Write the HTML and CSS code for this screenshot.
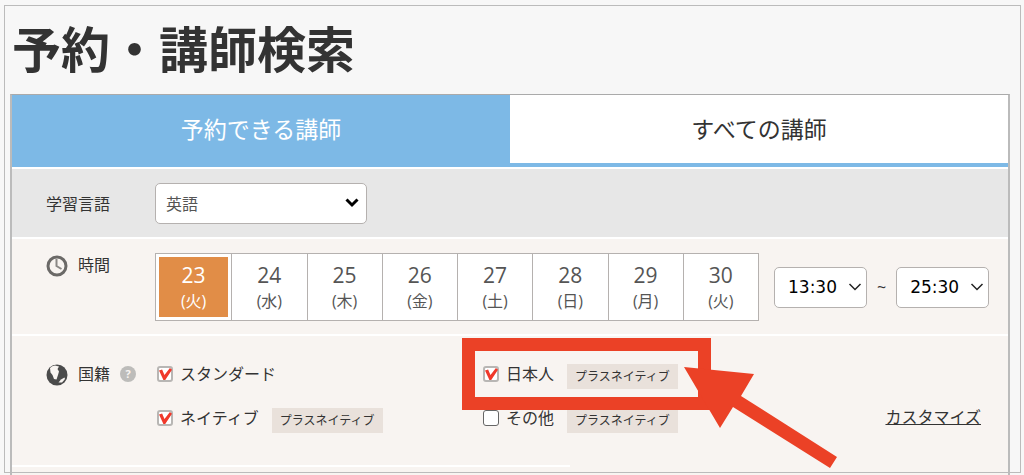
FILE: index.html
```html
<!DOCTYPE html>
<html lang="ja">
<head>
<meta charset="utf-8">
<meta name="viewport" content="width=device-width,initial-scale=1.0">
<title>予約・講師検索</title>
<link rel="stylesheet" href="styles.css">
</head>
<body>
<h1>予約・講師検索</h1>
<form class="search">
<nav class="tabs">
<a class="tab on" href="#reserve">予約できる講師</a>
<a class="tab" href="#all">すべての講師</a>
</nav>
<div class="row language">
<label class="name" for="language">学習言語</label>
<div class="selectbox wide">
<select id="language"><option>英語</option></select>
<svg class="arrow" width="14" height="10" viewBox="0 0 14 10"><path d="M1.5 1.5L7 7L12.5 1.5" fill="none" stroke="#000" stroke-width="3"/></svg>
</div>
</div>
<div class="row time">
<div class="name">
<svg width="22" height="24" viewBox="0 0 22 24"><circle cx="11" cy="13" r="9" fill="none" stroke="#6b6967" stroke-width="3"/><path d="M10.5 6V13L15.5 16" fill="none" stroke="#8a8886" stroke-width="2"/></svg>
<span>時間</span>
</div>
<div class="days">
<button type="button" class="on">23<small>(火)</small></button>
<button type="button">24<small>(水)</small></button>
<button type="button">25<small>(木)</small></button>
<button type="button">26<small>(金)</small></button>
<button type="button">27<small>(土)</small></button>
<button type="button">28<small>(日)</small></button>
<button type="button">29<small>(月)</small></button>
<button type="button">30<small>(火)</small></button>
</div>
<div class="range">
<div class="selectbox">
<select aria-label="開始時間"><option>13:30</option></select>
<svg class="arrow" width="14" height="10" viewBox="0 0 14 10"><path d="M1.5 2L7 7.5L12.5 2" fill="none" stroke="#222" stroke-width="1.5"/></svg>
</div>
<span>~</span>
<div class="selectbox">
<select aria-label="終了時間"><option>25:30</option></select>
<svg class="arrow" width="14" height="10" viewBox="0 0 14 10"><path d="M1.5 2L7 7.5L12.5 2" fill="none" stroke="#222" stroke-width="1.5"/></svg>
</div>
</div>
</div>
<div class="row country">
<div class="name">
<svg width="22" height="24" viewBox="0 -2 22 24"><circle cx="11" cy="11" r="10.5" fill="#4b4b4b"/><path d="M4 4Q6 1.5 9 1.5L13 2.5L11.5 5L13 7.5L12 11L10.5 15.5L8 15L6.5 11L4.5 8.5Z" fill="#f8f4f1"/><path d="M12.5 18.5L15 15.5L18.5 13.5L19 15L16 18.5Z" fill="#f8f4f1"/></svg>
<span>国籍</span>
<button type="button" class="help">?</button>
</div>
<div class="checks">
<div class="check"><label><input type="checkbox" checked>スタンダード</label></div>
<div class="check"><label><input type="checkbox" checked>日本人</label><span class="tag">プラスネイティブ</span>
<svg class="pointer" width="376" height="134" viewBox="0 0 376 134"><rect x="6.5" y="6.5" width="236" height="59" fill="none" stroke="#eb4126" stroke-width="13"/><path d="M222 29L292 36L279 58L375 119L368 130L271 69L258 90Z" fill="#eb4126"/></svg>
</div>
<div class="check"><label><input type="checkbox" checked>ネイティブ</label><span class="tag">プラスネイティブ</span></div>
<div class="check"><label><input type="checkbox">その他</label><span class="tag">プラスネイティブ</span></div>
</div>
<a class="customize" href="#customize">カスタマイズ</a>
</div>
<div class="next"></div>
</form>
<div class="frame"></div>
</body>
</html>
```

FILE: styles.css
```css
* {
 box-sizing: border-box;
}
body {
 background-color: #F7F7F7;
 color: #333;
 font-family: 'Open Sans','Noto Sans CJK JP',sans-serif;
 font-size: 16px;
 line-height: 24px;
 margin: 0;
 min-height: 100vh;
 padding: 12px 14px 0 10px;
 position: relative;
}
h1 {
 font-family: 'Noto Sans CJK JP',sans-serif;
 font-size: 49px;
 line-height: 70px;
 margin: 0 0 12px 2px;
}
.search {
 background-color: #F8F4F1;
 border: 2px solid #BBB;
 border-top: 1px solid #AAA;
 border-bottom: 0;
}
.tabs {
 background-color: #FFF;
 display: flex;
}
.tab {
 border-bottom: 4px solid #7DB9E6;
 color: #333;
 flex: 1;
 font-size: 23px;
 line-height: 68px;
 text-align: center;
 text-decoration: none;
}
.tab.on {
 background-color: #7DB9E6;
 color: #FFF;
}
.row {
 border-top: 2px solid #FFF;
 display: flex;
 padding: 14px 18px 13px 34px;
}
.name {
 align-items: center;
 display: flex;
 flex: none;
 gap: 10px;
 height: 24px;
 width: 109px;
}
.language {
 align-items: center;
 background-color: #E7E7E7;
}
.selectbox {
 position: relative;
 width: 93px;
}
.wide {
 width: 212px;
}
select {
 -webkit-appearance: none;
 appearance: none;
 background-color: #FFF;
 border: 1px solid #B5B1AF;
 border-radius: 5px;
 color: #000;
 display: block;
 font-family: 'DejaVu Sans',sans-serif;
 font-size: 17px;
 height: 41px;
 padding: 0 13px;
 width: 100%;
}
.wide select {
 color: #555;
 font-family: 'Noto Sans CJK JP',sans-serif;
 font-size: 16px;
 padding: 0 10px 2px;
}
.arrow {
 pointer-events: none;
 position: absolute;
 right: 5px;
 top: 15px;
}
.wide .arrow {
 right: 8px;
}
.days {
 border: 1px solid #B5B1AF;
 display: grid;
 grid-template-columns: repeat(8, 1fr);
 height: 68px;
 width: 604px;
}
.days button {
 background-color: #FFF;
 border: 0;
 color: #555;
 font-family: inherit;
 font-size: 21px;
 line-height: 26px;
 padding: 2px 0 0;
}
.days button + button {
 border-left: 1px solid #B5B1AF;
}
.days .on {
 background-color: #E18D47;
 border: 3px solid #FFF;
 color: #FFF;
}
.days small {
 display: block;
 font-size: 16px;
}
.range {
 align-items: center;
 display: flex;
 gap: 10px;
 margin-left: 15px;
}
.country {
 padding: 26px 27px 32px 34px;
}
.help {
 background-color: #BDBCBA;
 border: 0;
 border-radius: 50%;
 color: #F8F4F1;
 font-family: 'Open Sans',sans-serif;
 font-size: 11px;
 font-weight: bold;
 height: 16px;
 line-height: 16px;
 padding: 0;
 width: 16px;
}
.checks {
 display: grid;
 flex: 1;
 grid-template-columns: 326px 1fr;
 row-gap: 17px;
}
.check {
 align-items: flex-start;
 display: flex;
 gap: 13px;
 position: relative;
}
.check label {
 align-items: center;
 display: flex;
 gap: 7px;
}
input {
 -webkit-appearance: none;
 appearance: none;
 background: #FFF;
 border: 1px solid #666;
 border-radius: 3px;
 height: 16px;
 margin: 0 0 0 2px;
 position: relative;
 width: 16px;
}
input:checked {
 border: 2px solid #B8B6B4;
}
/* red tick */
input:checked:after {
 background-color: #F0392B;
 clip-path: polygon(0 20%, 24% 12%, 42% 58%, 84% 0, 100% 14%, 48% 100%, 34% 100%);
 content: "";
 height: 12px;
 left: 0;
 position: absolute;
 top: 0;
 width: 13px;
}
.tag {
 background-color: #E9E1DB;
 font-size: 12px;
 line-height: 25px;
 margin-top: 2px;
 padding: 0 8px;
}
.pointer {
 left: -19px;
 position: absolute;
 top: -24px;
 z-index: 1;
}
.customize {
 align-self: flex-start;
 color: #333;
 margin-top: 43px;
}
.next {
 height: 10px;
}
.next:before {
 background-color: #FFF;
 content: "";
 display: block;
 height: 2px;
 width: 56%;
}
.frame {
 border: 1px solid #BBB;
 bottom: 2px;
 left: 4px;
 pointer-events: none;
 position: absolute;
 right: 3px;
 top: 5px;
}
```
